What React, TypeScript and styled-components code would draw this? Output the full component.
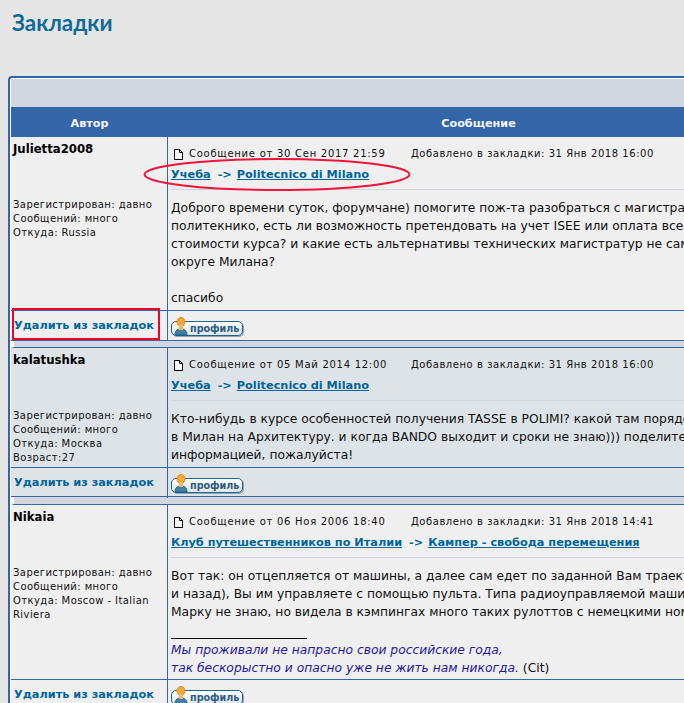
import React from 'react';
import styled, { createGlobalStyle } from 'styled-components';

const Global = createGlobalStyle`
  html, body { margin: 0; padding: 0; background: #e5e5e5; }
  body { font-family: "DejaVu Sans", Verdana, sans-serif; }
`;

const Page = styled.div`
  position: relative;
  width: 684px;
  height: 703px;
  overflow: hidden;
  background: #e5e5e5;
`;
const Title = styled.h1`
  margin: 0;
  padding: 8px 0 0 12px;
  height: 76px;
  box-sizing: border-box;
  font: bold 22.4px/30px Lato, sans-serif;
  color: #0f6a99;
`;
const Board = styled.div`
  width: 790px;
  margin-left: 8px;
  border: 2px solid #3465a9;
  border-right: 0;
  border-radius: 4px 0 0 0;
  background: #fff;
  padding: 1px 0 0 1px;
`;
const TopBand = styled.div`
  height: 28px;
  background: #d1d7dc;
`;
const HeaderRow = styled.div`
  display: grid;
  grid-template-columns: 157px 1fr;
  height: 30px;
  background: #3465a9;
`;
const HeaderCell = styled.div<{ $shift?: number }>`
  font: bold 11.2px/33px "DejaVu Sans", sans-serif;
  color: #f2f5f8;
  text-align: center;
  padding-right: ${p => p.$shift ?? 0}px;
`;
const Row = styled.div<{ $alt?: boolean }>`
  display: grid;
  grid-template-columns: 157px 1fr;
  background: ${p => (p.$alt ? '#dee3e7' : '#efefef')};
`;
const Author = styled.div<{ $h: number }>`
  height: ${p => p.$h}px;
  box-sizing: border-box;
  padding: 4px 3px 0 2px;
  border-right: 1px solid #3465a9;
`;
const Name = styled.div`
  font: bold 11.7px/16px "DejaVu Sans", sans-serif;
  color: #000;
  height: 57px;
`;
const Info = styled.div`
  font: 10px/14px "DejaVu Sans", sans-serif;
  letter-spacing: 0.42px;
  color: #111;
  white-space: nowrap;
`;
const Post = styled.div`
  padding: 0 0 0 3px;
  min-width: 0;
`;
const Meta = styled.div`
  display: flex;
  align-items: center;
  height: 28px;
  padding: 6px 0 0 3px;
  box-sizing: border-box;
  font: 10px/14px "DejaVu Sans", sans-serif;
  color: #111;
  white-space: nowrap;
`;
const MetaPosted = styled.span`
  margin-left: 6px;
  width: 222px;
  letter-spacing: 0.73px;
`;
const MetaAdded = styled.span`
  letter-spacing: 0.55px;
`;
const Crumbs = styled.div`
  height: 20px;
  font: bold 11.3px/20px "DejaVu Sans", sans-serif;
  color: #006699;
  white-space: nowrap;
`;
const CrumbLink = styled.a`
  color: #006699;
  text-decoration: underline;
`;
const Arrow = styled.span`
  margin: 0 5px 0 7px;
`;
const Rule = styled.div`
  height: 1px;
  background: #d1d7dc;
  margin-top: 4px;
`;
const Body = styled.div<{ $h: number }>`
  height: ${p => p.$h}px;
  box-sizing: border-box;
  padding-top: 9px;
  font: 12.3px/18px "DejaVu Sans", sans-serif;
  color: #111;
  white-space: nowrap;
  overflow: hidden;
`;
const SigRule = styled.div`
  width: 136px;
  height: 1px;
  background: #111;
  margin: 17px 0 2px;
`;
const Quote = styled.i`
  color: #251b9c;
`;
const Actions = styled.div<{ $h: number; $closed?: boolean }>`
  grid-column: 1 / -1;
  display: grid;
  grid-template-columns: 157px 1fr;
  height: ${p => p.$h}px;
  border-top: 1px solid #3465a9;
  border-bottom: ${p => (p.$closed ? '1px solid #3465a9' : '0')};
`;
const RemoveCell = styled.div`
  border-right: 1px solid #3465a9;
  padding: 0 0 0 3px;
`;
const Remove = styled.a`
  font: bold 11.3px/30px "DejaVu Sans", sans-serif;
  color: #006699;
  white-space: nowrap;
`;
const ButtonCell = styled.div`
  padding: 10px 0 0 3px;
`;
const Gap = styled.div<{ $h: number }>`
  height: ${p => p.$h}px;
  background: #d1d7dc;
  border-bottom: 1px solid #3465a9;
  border-left: 3px solid #fff;
`;
const Profile = styled.span`
  position: relative;
  display: block;
  width: 70px;
  height: 13px;
  border: 1px solid #1f6586;
  border-radius: 5px;
  background: linear-gradient(#ffffff, #dfe6ea);
  box-shadow: 1px 1px 0 #8fa5b5;
`;
const ProfileIcon = styled.svg`
  position: absolute;
  left: 2px;
  top: -5px;
`;
const ProfileText = styled.span`
  position: absolute;
  left: 18px;
  top: 0;
  font: bold 9.6px/13px "DejaVu Sans", sans-serif;
  color: #2c5c80;
`;
const Annotations = styled.svg`
  position: absolute;
  left: 0;
  top: 0;
  pointer-events: none;
`;
const DocIcon = styled.svg`
  flex: none;
`;

const PageIcon = () => (
  <DocIcon width="9" height="11" viewBox="0 0 9 11">
    <path d="M0.5 0.5H5.5L8.5 3.5V10.5H0.5Z" fill="#fff" stroke="#000" />
    <path d="M5.5 0.5V3.5H8.5" fill="none" stroke="#000" />
  </DocIcon>
);

const ProfileButton = () => (
  <Profile>
    <ProfileIcon width="14" height="19" viewBox="0 0 14 19">
      <path d="M1 18c0-4 2-6 6-6s6 2 6 6z" fill="#3f7fa8" stroke="#1f5f84" />
      <ellipse cx="7" cy="5" rx="4" ry="4.5" fill="#f2a93b" stroke="#e09020" />
      <rect x="5" y="8" width="4" height="5" fill="#f2b85a" />
    </ProfileIcon>
    <ProfileText>профиль</ProfileText>
  </Profile>
);

type Item = {
  name: string;
  info: string[];
  posted: string;
  added: string;
  crumbs: [string, string];
  lines: string[];
  sig?: boolean;
  alt?: boolean;
  topH: number;
  bodyH: number;
  actH: number;
  gapH: number;
  closed: boolean;
};

const items: Item[] = [
  {
    name: 'Julietta2008',
    info: ['Зарегистрирован: давно', 'Сообщений: много', 'Откуда: Russia'],
    posted: 'Сообщение от 30 Сен 2017 21:59',
    added: 'Добавлено в закладки: 31 Янв 2018 16:00',
    crumbs: ['Учеба', 'Politecnico di Milano'],
    lines: [
      'Доброго времени суток, форумчане) помогите пож-та разобраться с магистратурой в',
      'политекнико, есть ли возможность претендовать на учет ISEE или оплата всего',
      'стоимости курса? и какие есть альтернативы технических магистратур не самого',
      'округе Милана?',
      '\u00a0',
      'спасибо',
    ],
    topH: 173,
    bodyH: 119,
    actH: 29,
    gapH: 6,
    closed: true,
  },
  {
    name: 'kalatushka',
    info: ['Зарегистрирован: давно', 'Сообщений: много', 'Откуда: Москва', 'Возраст:27'],
    posted: 'Сообщение от 05 Май 2014 12:00',
    added: 'Добавлено в закладки: 31 Янв 2018 16:00',
    crumbs: ['Учеба', 'Politecnico di Milano'],
    lines: [
      'Кто-нибудь в курсе особенностей получения TASSE в POLIMI? какой там порядок',
      'в Милан на Архитектуру. и когда BANDO выходит и сроки не знаю))) поделитесь',
      'информацией, пожалуйста!',
    ],
    alt: true,
    topH: 119,
    bodyH: 65,
    actH: 28,
    gapH: 7,
    closed: true,
  },
  {
    name: 'Nikaia',
    info: ['Зарегистрирован: давно', 'Сообщений: много', 'Откуда: Moscow - Italian', 'Riviera'],
    posted: 'Сообщение от 06 Ноя 2006 18:40',
    added: 'Добавлено в закладки: 31 Янв 2018 14:41',
    crumbs: ['Клуб путешественников по Италии', 'Кампер - свобода перемещения'],
    lines: [
      'Вот так: он отцепляется от машины, а далее сам едет по заданной Вам траектории',
      'и назад), Вы им управляете с помощью пульта. Типа радиоуправляемой машинки.',
      'Марку не знаю, но видела в кэмпингах много таких рулоттов с немецкими номерами.',
    ],
    sig: true,
    topH: 174,
    bodyH: 120,
    actH: 30,
    gapH: 0,
    closed: false,
  },
];

export default function App() {
  return (
    <Page>
      <Global />
      <Title>Закладки</Title>
      <Board>
        <TopBand />
        <HeaderRow>
          <HeaderCell>Автор</HeaderCell>
          <HeaderCell $shift={12}>Сообщение</HeaderCell>
        </HeaderRow>
        {items.map((it, i) => (
          <React.Fragment key={it.name}>
            <Row $alt={it.alt}>
              <Author $h={it.topH}>
                <Name>{it.name}</Name>
                <Info>
                  {it.info.map(t => (
                    <div key={t}>{t}</div>
                  ))}
                </Info>
              </Author>
              <Post>
                <Meta>
                  <PageIcon />
                  <MetaPosted>{it.posted}</MetaPosted>
                  <MetaAdded>{it.added}</MetaAdded>
                </Meta>
                <Crumbs>
                  <CrumbLink>{it.crumbs[0]}</CrumbLink>
                  <Arrow>-&gt;</Arrow>
                  <CrumbLink>{it.crumbs[1]}</CrumbLink>
                </Crumbs>
                <Rule />
                <Body $h={it.bodyH}>
                  {it.lines.map((l, n) => (
                    <div key={n}>{l}</div>
                  ))}
                  {it.sig && (
                    <>
                      <SigRule />
                      <div>
                        <Quote>Мы проживали не напрасно свои российские года,</Quote>
                      </div>
                      <div>
                        <Quote>так бескорыстно и опасно уже не жить нам никогда.</Quote> (Cit)
                      </div>
                    </>
                  )}
                </Body>
              </Post>
            </Row>
            <Row $alt={it.alt}>
              <Actions $h={it.actH} $closed={it.closed}>
                <RemoveCell>
                  <Remove>Удалить из закладок</Remove>
                </RemoveCell>
                <ButtonCell>
                  <ProfileButton />
                </ButtonCell>
              </Actions>
            </Row>
            {i < items.length - 1 && <Gap $h={it.gapH} />}
          </React.Fragment>
        ))}
      </Board>
      <Annotations width="684" height="703">
        <ellipse cx="277" cy="174.5" rx="132.5" ry="15.5" fill="none" stroke="#f0153c" strokeWidth="2" />
        <rect x="13" y="309" width="146" height="30" fill="none" stroke="#f0022e" strokeWidth="2" />
      </Annotations>
    </Page>
  );
}
